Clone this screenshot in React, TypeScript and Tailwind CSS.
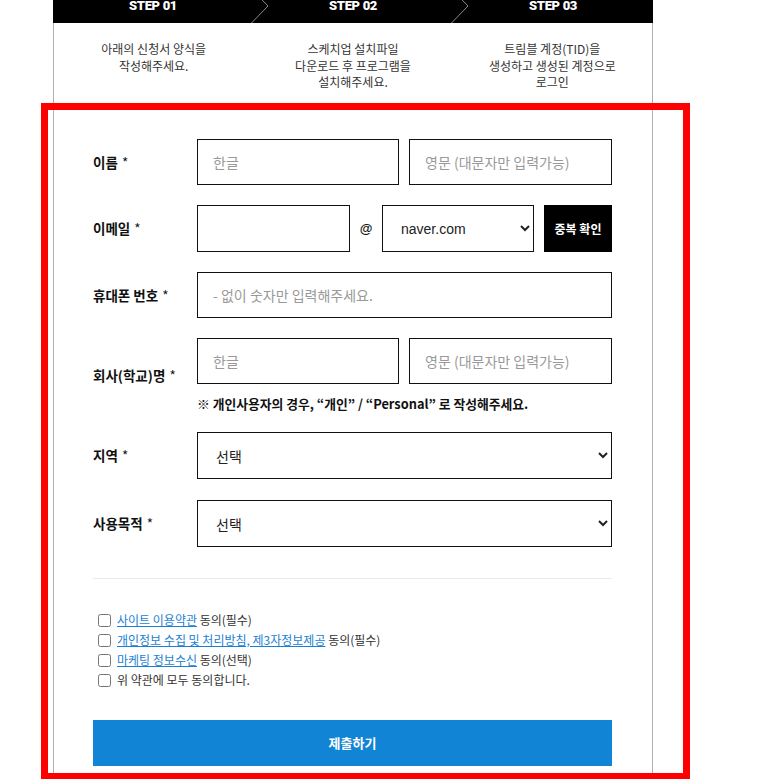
const KR = "font-['Noto_Sans_CJK_KR',sans-serif]";

function Chevron() {
  return (
    <svg
      className="absolute top-0 right-[-16px] z-10"
      width="18"
      height="34"
      viewBox="0 0 18 34"
    >
      <polyline points="0.5,0 17,17 0.5,34" fill="none" stroke="#8a8a8a" strokeWidth="1" />
    </svg>
  );
}

function Label({ text }: { text: string }) {
  return (
    <div className="w-[104px] shrink-0 text-[13.5px] font-bold text-[#111]">
      {text} <span className="ml-[1px] font-normal">*</span>
    </div>
  );
}

const inputCls =
  "h-[46px] border border-[#111] px-[15px] text-[14px] text-[#333] placeholder:text-[#999] outline-none";
const selectCls =
  "h-[47px] w-full border border-[#111] bg-white pl-[14px] pr-[4px] text-[14px] text-[#222] outline-none";

export default function App() {
  const steps = [
    { title: "STEP 01", lines: ["아래의 신청서 양식을", "작성해주세요."] },
    { title: "STEP 02", lines: ["스케치업 설치파일", "다운로드 후 프로그램을", "설치해주세요."] },
    { title: "STEP 03", lines: ["트림블 계정(TID)을", "생성하고 생성된 계정으로", "로그인"] },
  ];

  return (
    <div className={`relative h-[779px] w-full overflow-hidden bg-white ${KR}`}>
      <div className="ml-[53px] w-[600px]">
        {/* step bar */}
        <div className="-mt-[11px] flex h-[34px] bg-black">
          {steps.map((s, i) => (
            <div key={s.title} className="relative flex flex-1 items-center justify-center">
              <span className="font-['Roboto',sans-serif] text-[13px] font-black tracking-tight text-white">
                {s.title}
              </span>
              {i < 2 && <Chevron />}
            </div>
          ))}
        </div>

        <div className="min-h-[900px] border-x border-[#b0b0b0]">
          <div className="grid h-[116px] grid-cols-3 pt-[18px] text-center text-[12px] leading-[16.5px] text-[#333]">
            {steps.map((s) => (
              <div key={s.title}>
                {s.lines.map((l) => (
                  <div key={l}>{l}</div>
                ))}
              </div>
            ))}
          </div>

          <form className="pl-[39px] pr-[40px]">
            {/* name */}
            <div className="mb-[20px] flex items-center">
              <Label text="이름" />
              <div className="flex flex-1 gap-[10px]">
                <input className={`${inputCls} w-[202px]`} placeholder="한글" />
                <input className={`${inputCls} flex-1`} placeholder="영문 (대문자만 입력가능)" />
              </div>
            </div>

            {/* email */}
            <div className="mb-[20px] flex items-center">
              <Label text="이메일" />
              <div className="flex flex-1 items-center">
                <input className={`${inputCls} h-[47px] w-[153px]`} />
                <span className="w-[32px] text-center font-['Liberation_Sans',sans-serif] text-[13px] font-bold text-[#111]">
                  @
                </span>
                <div className="w-[152px]">
                  <select className={`${selectCls} font-['Liberation_Sans',sans-serif] pl-[14px]`} defaultValue="naver.com">
                    <option>naver.com</option>
                    <option>gmail.com</option>
                    <option>daum.net</option>
                    <option>직접입력</option>
                  </select>
                </div>
                <button
                  type="button"
                  className="ml-[10px] h-[47px] flex-1 bg-black text-[12px] font-bold text-white"
                >
                  중복 확인
                </button>
              </div>
            </div>

            {/* phone */}
            <div className="mb-[20px] flex items-center">
              <Label text="휴대폰 번호" />
              <input className={`${inputCls} flex-1`} placeholder="- 없이 숫자만 입력해주세요." />
            </div>

            {/* company */}
            <div className="mb-[20px] flex items-center">
              <Label text="회사(학교)명" />
              <div className="flex-1">
                <div className="flex gap-[10px]">
                  <input className={`${inputCls} w-[202px]`} placeholder="한글" />
                  <input className={`${inputCls} flex-1`} placeholder="영문 (대문자만 입력가능)" />
                </div>
                <p className="mt-[12px] text-[12.8px] font-bold leading-[16px] text-[#111]">
                  ※ 개인사용자의 경우, “개인” / “Personal” 로 작성해주세요.
                </p>
              </div>
            </div>

            {/* region */}
            <div className="mb-[21px] flex items-center">
              <Label text="지역" />
              <div className="flex-1">
                <select className={selectCls} defaultValue="">
                  <option value="">선택</option>
                  <option>서울</option>
                  <option>경기</option>
                </select>
              </div>
            </div>

            {/* purpose */}
            <div className="flex items-center">
              <Label text="사용목적" />
              <div className="flex-1">
                <select className={selectCls} defaultValue="">
                  <option value="">선택</option>
                  <option>개인</option>
                  <option>교육</option>
                </select>
              </div>
            </div>

            <div className="mt-[31px] border-t border-[#eaeaea]" />

            <div className="mt-[31px] text-[12px] leading-[20px] text-[#333]">
              <label className="flex items-center">
                <input type="checkbox" className="ml-[5px] mr-[6px] h-[13px] w-[13px]" />
                <span>
                  <a href="#" className="text-[#1a7fd4] underline">사이트 이용약관</a> 동의(필수)
                </span>
              </label>
              <label className="flex items-center">
                <input type="checkbox" className="ml-[5px] mr-[6px] h-[13px] w-[13px]" />
                <span>
                  <a href="#" className="text-[#1a7fd4] underline">개인정보 수집 및 처리방침, 제3자정보제공</a> 동의(필수)
                </span>
              </label>
              <label className="flex items-center">
                <input type="checkbox" className="ml-[5px] mr-[6px] h-[13px] w-[13px]" />
                <span>
                  <a href="#" className="text-[#1a7fd4] underline">마케팅 정보수신</a> 동의(선택)
                </span>
              </label>
              <label className="flex items-center">
                <input type="checkbox" className="ml-[5px] mr-[6px] h-[13px] w-[13px]" />
                <span>위 약관에 모두 동의합니다.</span>
              </label>
            </div>

            <button
              type="button"
              className="mt-[30px] h-[46px] w-full bg-[#1184d6] text-[13px] font-bold text-white"
            >
              제출하기
            </button>
          </form>
        </div>
      </div>

      {/* highlight frame */}
      <div className="pointer-events-none absolute left-[41px] top-[103px] h-[677px] w-[649px] border-[7px] border-[#ff0000]" />
    </div>
  );
}
